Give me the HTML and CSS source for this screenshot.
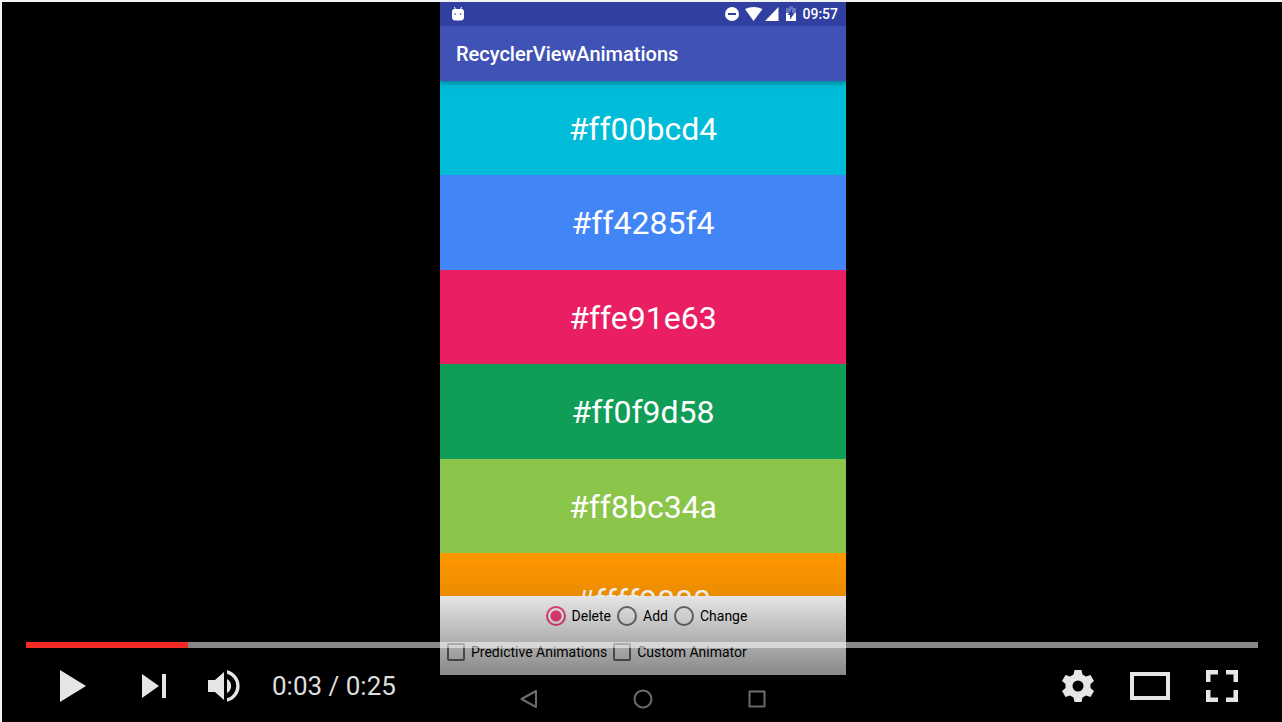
FILE: index.html
```html
<!DOCTYPE html>
<html lang="en">
<head>
<meta charset="utf-8">
<meta name="viewport" content="width=device-width, initial-scale=1">
<title>RecyclerViewAnimations</title>
<link rel="stylesheet" href="styles.css">
</head>
<body>
<main class="player">
  <section class="phone">
    <header class="status">
      <svg class="status-bot" width="12" height="14" viewBox="0 0 12 14" aria-hidden="true">
        <path d="M2.500 0l1 3M9.500 0l-1 3" stroke="#fff" stroke-width="1"/>
        <path d="M0 4.500a2.500 2.500 0 0 1 2.500-2.500h7A2.500 2.500 0 0 1 12 4.500V10a3.500 3.500 0 0 1-3.500 3.500h-5A3.500 3.500 0 0 1 0 10z" fill="#fff"/>
        <circle cx="3" cy="7" r=".8" fill="#3140a0"/><circle cx="8.500" cy="7" r=".8" fill="#3140a0"/>
      </svg>
      <div class="status-icons">
        <svg width="62" height="16" viewBox="0 0 62 16" fill="#fff" aria-hidden="true">
          <circle cx="8" cy="8" r="7"/>
          <path d="M4 7h8v2H4z" fill="#3140a0"/>
          <path d="M21 3Q29.500-1 38.500 3L29.500 15z"/>
          <path d="M54.500 1v14H41z"/>
        </svg>
        <svg width="10" height="16" viewBox="0 0 10 16" aria-hidden="true">
          <path d="M3 0.500h4V2h3v5H0V2h3z" fill="#6c76bb"/>
          <path d="M0 7h10v8H0z" fill="#fff"/>
          <path d="M6 3L1.500 9H4v4.500L8.500 7H6z" fill="#3140a0"/>
        </svg>
      </div>
      <span class="status-time">09:57</span>
    </header>
    <h1 class="appbar">RecyclerViewAnimations</h1>
    <ul class="swatches">
      <li class="swatch cyan"><span class="swatch-name">#ff00bcd4</span></li>
      <li class="swatch blue"><span class="swatch-name">#ff4285f4</span></li>
      <li class="swatch pink"><span class="swatch-name">#ffe91e63</span></li>
      <li class="swatch green"><span class="swatch-name">#ff0f9d58</span></li>
      <li class="swatch lime"><span class="swatch-name">#ff8bc34a</span></li>
      <li class="swatch orange"><span class="swatch-name">#ffff9800</span></li>
    </ul>
    <form class="options">
      <div class="option-row modes">
        <label class="option"><input class="radio" type="radio" name="mode" checked>Delete</label>
        <label class="option"><input class="radio" type="radio" name="mode">Add</label>
        <label class="option"><input class="radio" type="radio" name="mode">Change</label>
      </div>
      <div class="option-row">
        <label class="option"><input class="check" type="checkbox">Predictive Animations</label>
        <label class="option"><input class="check" type="checkbox">Custom Animator</label>
      </div>
    </form>
    <nav class="navbar">
      <button class="nav-button" aria-label="Back"><svg width="20" height="20" viewBox="0 0 20 20"><path d="M17 2v16L2.500 10z"/></svg></button>
      <button class="nav-button" aria-label="Home"><svg width="20" height="20" viewBox="0 0 20 20"><circle cx="10" cy="10" r="8.500"/></svg></button>
      <button class="nav-button" aria-label="Recents"><svg width="20" height="20" viewBox="0 0 20 20"><rect x="2.500" y="2.500" width="15" height="15"/></svg></button>
    </nav>
  </section>

  <div class="chrome">
    <input class="seek" type="range" min="0" max="2500" value="329" aria-label="Seek" style="--played: 13.15%">
    <div class="controls">
      <button class="control play" aria-label="Play"><svg viewBox="0 0 72 72"><path d="M24 20l26 16-26 16z"/></svg></button>
      <button class="control" aria-label="Next"><svg viewBox="0 0 72 72"><path d="M24 24l17 12-17 12zM44 24h4v24h-4z"/></svg></button>
      <button class="control" aria-label="Mute"><svg viewBox="0 0 72 72"><path d="M18 30h7l9-8v28l-9-8h-7zM37 29a8 8 0 0 1 0 14zM37 20.200a16.200 16.200 0 0 1 0 31.600v-3.500a12.800 12.800 0 0 0 0-24.600z"/></svg></button>
      <span class="time">0:03 / 0:25</span>
      <button class="control settings" aria-label="Settings"><svg viewBox="0 0 72 72"><path fill-rule="evenodd" d="M32.500 20h7l1 4.500 3.500 2 4.500-1.500 3.500 6-3.500 3v4l3.500 3-3.500 6-4.500-1.500-3.500 2-1 4.500h-7l-1-4.500-3.500-2-4.500 1.500-3.500-6 3.500-3v-4l-3.500-3 3.500-6 4.500 1.500 3.500-2zM36 30.500a5.500 5.500 0 1 0 0 11a5.500 5.500 0 1 0 0-11z"/></svg></button>
      <button class="control" aria-label="Theater mode"><svg viewBox="0 0 72 72"><path fill-rule="evenodd" d="M16 22h40v28H16zM20 26v20h32V26z"/></svg></button>
      <button class="control" aria-label="Full screen"><svg viewBox="0 0 72 72"><path d="M20 20h12v4.500h-7.500V32H20zM40 20h12v12h-4.500v-7.500H40zM20 40h4.500v7.500H32V52H20zM47.500 40H52v12H40v-4.500h7.500z"/></svg></button>
    </div>
  </div>
</main>
</body>
</html>
```
FILE: styles.css
```css
* {
  box-sizing: border-box;
}

body {
  margin: 0;
  background: #f1f4f5;
  font-family: Roboto, "Noto Sans", sans-serif;
}

button {
  padding: 0;
  border: 0;
  background: none;
}

svg {
  display: block;
}

.player {
  position: relative;
  display: flex;
  justify-content: center;
  height: 100vh;
  border: solid #f1f4f5;
  border-width: 2px 0 0 2px;
  padding-left: 2px;
  background: #000;
  overflow: hidden;
}

.phone {
  display: flex;
  flex-direction: column;
  width: 406px;
}

.status {
  display: flex;
  align-items: center;
  height: 24px;
  padding: 0 8px 0 12px;
  background: #3140a0;
  color: #fff;
}

.status-icons {
  display: flex;
  margin-left: auto;
}

.status-time {
  margin-left: 6px;
  font-size: 14px;
  font-weight: 500;
}

.appbar {
  position: relative;
  height: 55px;
  margin: 0;
  padding: 0 16px;
  background: #4052b5;
  box-shadow: 0 2px 5px rgba(0, 0, 0, 0.35);
  clip-path: inset(0 0 -10px 0);
  color: #fff;
  font-size: 20px;
  font-weight: 500;
  line-height: 56px;
}

.swatches {
  display: flex;
  flex: 1;
  flex-direction: column;
  min-height: 0;
  margin: 0;
  padding: 0;
  list-style: none;
}

.swatch {
  flex: 11 1 0;
  min-height: 0;
  overflow: hidden;
  color: #fff;
  font-size: 32px;
  line-height: 96px;
  text-align: center;
}

.swatch-name {
  display: block;
}

.cyan { background: #00bcd8; }
.blue { background: #4285f6; }
.pink { background: #e91e63; }
.green { background: #0f9d58; }
.lime { background: #8bc54a; }

.orange {
  flex-grow: 5;
  background: #ff9800;
}

.options {
  height: 79px;
  padding-top: 2px;
  background: #fafafa;
  color: #000;
  font-size: 14px;
}

.option-row {
  display: flex;
  align-items: center;
  gap: 6px;
  height: 36px;
  padding-left: 7px;
}

.modes {
  justify-content: center;
}

.option {
  display: flex;
  align-items: center;
  gap: 6px;
}

.radio,
.check {
  flex: none;
  margin: 0;
  border: 2px solid #707070;
  appearance: none;
}

.radio {
  width: 20px;
  height: 20px;
  border-radius: 50%;
}

.radio:checked {
  border-color: #ff4081;
  background: radial-gradient(circle, #ff4081 5px, transparent 6px);
}

.check {
  width: 18px;
  height: 18px;
  border-radius: 2px;
}

.navbar {
  display: flex;
  align-items: center;
  justify-content: center;
  gap: 66px;
  height: 47px;
  background: #000;
}

.nav-button {
  display: flex;
  justify-content: center;
  width: 48px;
}

.nav-button svg {
  fill: none;
  stroke: #d8d8d8;
  stroke-width: 2;
  stroke-linejoin: round;
}

/* Controls and their scrim float over the video. */
.chrome {
  position: absolute;
  inset: auto 0 0;
  display: flex;
  flex-direction: column;
  justify-content: flex-end;
  height: 170px;
  padding: 0 24px;
  background: linear-gradient(rgba(0, 0, 0, 0), rgba(0, 0, 0, 0.08) 25%, rgba(0, 0, 0, 0.45) 72%, rgba(0, 0, 0, 0.55));
}

.seek {
  width: 100%;
  height: 6px;
  margin: 0;
  background: linear-gradient(to right, #f42b22 var(--played), rgba(255, 255, 255, 0.53) var(--played));
  appearance: none;
}

.seek::-webkit-slider-thumb {
  width: 6px;
  height: 6px;
  appearance: none;
}

.controls {
  display: flex;
  align-items: center;
  height: 74px;
  padding-top: 2px;
}

.control {
  flex: none;
  width: 72px;
  height: 72px;
}

.control svg {
  fill: #e6e6e6;
}

.play {
  margin: 0 10px;
}

.time {
  margin-left: 10px;
  color: #ddd;
  font-size: 26px;
}

.settings {
  margin-left: auto;
}
```
